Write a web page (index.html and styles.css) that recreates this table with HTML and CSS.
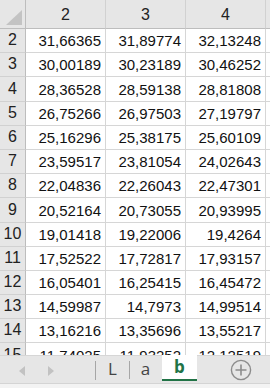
FILE: index.html
```html
<!DOCTYPE html>
<html>
<head>
<meta charset="utf-8">
<link rel="stylesheet" href="styles.css">
</head>
<body>
<div class="app">
  <div class="sheet">
    <div class="grid">
      <div class="hd corner"><svg class="tri" width="16" height="15" viewBox="0 0 16 15"><polygon points="16,0 16,15 0,15" fill="#c3c3c3"/></svg></div>
      <div class="hd col">2</div><div class="hd col">3</div><div class="hd col">4</div><div class="hd col last"></div>

      <div class="rh">2</div><div class="c">31,66365</div><div class="c">31,89774</div><div class="c">32,13248</div><div class="c e"></div>
      <div class="rh">3</div><div class="c">30,00189</div><div class="c">30,23189</div><div class="c">30,46252</div><div class="c e"></div>
      <div class="rh">4</div><div class="c">28,36528</div><div class="c">28,59138</div><div class="c">28,81808</div><div class="c e"></div>
      <div class="rh">5</div><div class="c">26,75266</div><div class="c">26,97503</div><div class="c">27,19797</div><div class="c e"></div>
      <div class="rh">6</div><div class="c">25,16296</div><div class="c">25,38175</div><div class="c">25,60109</div><div class="c e"></div>
      <div class="rh">7</div><div class="c">23,59517</div><div class="c">23,81054</div><div class="c">24,02643</div><div class="c e"></div>
      <div class="rh">8</div><div class="c">22,04836</div><div class="c">22,26043</div><div class="c">22,47301</div><div class="c e"></div>
      <div class="rh">9</div><div class="c">20,52164</div><div class="c">20,73055</div><div class="c">20,93995</div><div class="c e"></div>
      <div class="rh">10</div><div class="c">19,01418</div><div class="c">19,22006</div><div class="c">19,4264</div><div class="c e"></div>
      <div class="rh">11</div><div class="c">17,52522</div><div class="c">17,72817</div><div class="c">17,93157</div><div class="c e"></div>
      <div class="rh">12</div><div class="c">16,05401</div><div class="c">16,25415</div><div class="c">16,45472</div><div class="c e"></div>
      <div class="rh">13</div><div class="c">14,59987</div><div class="c">14,7973</div><div class="c">14,99514</div><div class="c e"></div>
      <div class="rh">14</div><div class="c">13,16216</div><div class="c">13,35696</div><div class="c">13,55217</div><div class="c e"></div>
      <div class="rh">15</div><div class="c">11,74025</div><div class="c">11,93252</div><div class="c">12,12519</div><div class="c e"></div>
    </div>
  </div>
  <div class="tabbar">
    <div class="nav">
      <svg width="6" height="10" viewBox="0 0 6 10"><polygon points="6,0 6,10 0,5" fill="#c2c2c2"/></svg>
      <svg width="6" height="10" viewBox="0 0 6 10"><polygon points="0,0 0,10 6,5" fill="#c2c2c2"/></svg>
    </div>
    <div class="tabs">
      <div class="tab">L</div>
      <div class="tab">a</div>
      <div class="tab active">b</div>
    </div>
    <div class="add">
      <svg width="22" height="22" viewBox="0 0 22 22"><circle cx="11" cy="11" r="9.6" fill="none" stroke="#8c8c8c" stroke-width="1.4"/><path d="M11 5.5v11M5.5 11h11" stroke="#8c8c8c" stroke-width="1.6"/></svg>
    </div>
  </div>
  <div class="status"></div>
</div>
</body>
</html>
```
FILE: styles.css
```css
* { box-sizing: border-box; }
html, body { margin: 0; padding: 0; background: #fff; }
.app {
  width: 270px;
  height: 388px;
  display: flex;
  flex-direction: column;
  overflow: hidden;
  font-family: "Liberation Sans", Arial, sans-serif;
}
.sheet {
  height: 355px;
  overflow: hidden;
  flex: none;
}
.grid {
  display: grid;
  grid-template-columns: 26px 80px 80px 80px 20px;
  grid-template-rows: 29px;
  grid-auto-rows: 24.2px;
  font-size: 15px;
}
.hd {
  background: #e6e6e6;
  border-right: 1px solid #d1d1d1;
  border-bottom: 1px solid #bdbdbd;
  color: #222;
  display: flex;
  align-items: flex-end;
  justify-content: center;
  padding-bottom: 4px;
  font-size: 16px;
}
.corner {
  border-right: 1px solid #bdbdbd;
  justify-content: flex-end;
  padding: 0 3px 3px 0;
}
.tri { display: block; }
.col.last { border-right: none; }
.rh {
  background: #e6e6e6;
  border-right: 1px solid #bdbdbd;
  border-bottom: 1px solid #d1d1d1;
  color: #222;
  display: flex;
  align-items: flex-end;
  justify-content: center;
  padding-bottom: 3px;
  font-size: 16px;
}
.c {
  border-right: 1px solid #d6d6d6;
  border-bottom: 1px solid #d6d6d6;
  color: #111;
  display: flex;
  align-items: flex-end;
  justify-content: flex-end;
  padding: 0 4px 3px 0;
  white-space: nowrap;
}
.c.e { border-right: none; }
.tabbar {
  height: 28px;
  flex: none;
  background: #e6e6e6;
  border-top: 1px solid #d6d6d6;
  display: flex;
  align-items: stretch;
}
.nav {
  width: 96px;
  display: flex;
  align-items: center;
  gap: 23px;
  padding-left: 19px;
  padding-top: 1px;
  border-right: 1px solid #a6a6a6;
  margin: 5px 0 3px 0;
}
.tabs {
  display: flex;
  align-items: stretch;
  margin-top: -1px;
}
.tab {
  width: 33px;
  display: flex;
  align-items: center;
  justify-content: center;
  font-size: 17px;
  color: #444;
  font-family: "Open Sans", "Liberation Sans", sans-serif;
  position: relative;
  padding-bottom: 2px;
}
.tab + .tab::before {
  content: "";
  position: absolute;
  left: 0;
  top: 6px;
  bottom: 4px;
  border-left: 1px solid #a6a6a6;
}
.tab.active {
  width: 35px;
  margin-left: 0;
  background: #fff;
  color: #217346;
  font-weight: bold;
  border-bottom: 2px solid #217346;
  margin-bottom: 2px;
}
.tab.active::before { display: none; }
.add {
  flex: 1;
  display: flex;
  align-items: center;
  justify-content: center;
  padding-left: 14px;
  padding-top: 1px;
}
.add svg { display: block; }
.status {
  flex: 1;
  background: #f3f3f3;
  border-top: 1px solid #d4d4d4;
}
```
